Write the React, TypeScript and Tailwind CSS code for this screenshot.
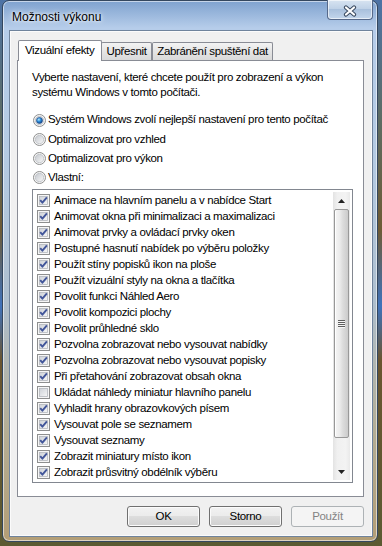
import React, { useState } from 'react';

const effects = [
  { label: 'Animace na hlavním panelu a v nabídce Start', on: true },
  { label: 'Animovat okna při minimalizaci a maximalizaci', on: true },
  { label: 'Animovat prvky a ovládací prvky oken', on: true },
  { label: 'Postupné hasnutí nabídek po výběru položky', on: true },
  { label: 'Použít stíny popisků ikon na ploše', on: true },
  { label: 'Použít vizuální styly na okna a tlačítka', on: true },
  { label: 'Povolit funkci Náhled Aero', on: true },
  { label: 'Povolit kompozici plochy', on: true },
  { label: 'Povolit průhledné sklo', on: true },
  { label: 'Pozvolna zobrazovat nebo vysouvat nabídky', on: true },
  { label: 'Pozvolna zobrazovat nebo vysouvat popisky', on: true },
  { label: 'Při přetahování zobrazovat obsah okna', on: true },
  { label: 'Ukládat náhledy miniatur hlavního panelu', on: false },
  { label: 'Vyhladit hrany obrazovkových písem', on: true },
  { label: 'Vysouvat pole se seznamem', on: true },
  { label: 'Vysouvat seznamy', on: true },
  { label: 'Zobrazit miniatury místo ikon', on: true },
  { label: 'Zobrazit průsvitný obdélník výběru', on: true },
];

const presets = [
  'Systém Windows zvolí nejlepší nastavení pro tento počítač',
  'Optimalizovat pro vzhled',
  'Optimalizovat pro výkon',
  'Vlastní:',
];

const Radio = ({ selected }: { selected: boolean }) => (
  <svg width="13" height="13" viewBox="0 0 13 13" className="shrink-0">
    <defs>
      <linearGradient id="rbg" x1="0" y1="0" x2="1" y2="1">
        <stop offset="0" stopColor="#c4c8ce" />
        <stop offset="1" stopColor="#f8f8f8" />
      </linearGradient>
      <radialGradient id="rdot" cx="0.38" cy="0.35" r="0.7">
        <stop offset="0" stopColor="#b4e8fc" />
        <stop offset="0.45" stopColor="#2f8fdb" />
        <stop offset="1" stopColor="#0d3a80" />
      </radialGradient>
    </defs>
    <circle cx="6.5" cy="6.5" r="6" fill="#f5f5f5" stroke="#8e8f8f" />
    <circle cx="6.5" cy="6.5" r="4.2" fill="url(#rbg)" stroke="#b7bbc1" strokeWidth="0.7" />
    {selected && <circle cx="6.5" cy="6.5" r="3" fill="url(#rdot)" stroke="#1c4c8c" strokeWidth="0.6" />}
  </svg>
);

const Check = ({ checked }: { checked: boolean }) => (
  <svg width="13" height="13" viewBox="0 0 13 13" className="shrink-0">
    <defs>
      <linearGradient id="cbg" x1="0" y1="0" x2="1" y2="1">
        <stop offset="0" stopColor="#cdd1d7" />
        <stop offset="1" stopColor="#f7f7f7" />
      </linearGradient>
    </defs>
    <rect x="0.5" y="0.5" width="12" height="12" fill="#f6f6f6" stroke="#8e8f8f" />
    <rect x="2.5" y="2.5" width="8" height="8" fill="url(#cbg)" stroke="#b3b7bd" strokeWidth="0.8" />
    {checked && (
      <path d="M3.2 6.2 L5.4 8.7 L9.9 3.3" fill="none" stroke="#42569a" strokeWidth="1.9" strokeLinejoin="round" />
    )}
  </svg>
);

const Button = ({ label, disabled }: { label: string; disabled?: boolean }) => (
  <button
    className={
      disabled
        ? 'w-[73px] h-[21px] rounded-[3px] border border-[#adb2b5] bg-[#f4f4f4] text-[#838383]'
        : 'w-[73px] h-[21px] rounded-[3px] border border-[#707070] bg-[linear-gradient(#f2f2f2_0%,#ebebeb_50%,#dddddd_50%,#cfcfcf_100%)] shadow-[inset_0_0_0_1px_#fbfbfb] text-black'
    }
  >
    {label}
  </button>
);

export default function App() {
  const [preset, setPreset] = useState(0);

  return (
    <div className="w-[382px] h-[546px] overflow-hidden pl-[2px] bg-[linear-gradient(180deg,#4d73a6_0%,#5d6c63_22%,#6e5b35_42%,#3f72bb_56%,#6a5530_66%,#5b5a32_100%)] font-['Liberation_Sans',Arial,sans-serif] text-[11.5px] tracking-[-0.35px] text-black select-none">
      {/* Window frame (Aero glass) */}
      <div className="w-[376px] h-[542px] flex flex-col rounded-[7px] border border-[#34475f] pl-[6px] pr-[4px] pb-[4px] bg-[linear-gradient(180deg,#7fa2cf_0%,#b6cdea_5%,#b4cae2_30%,#aebfcf_55%,#b4ad94_80%,#b39e76_100%)] shadow-[inset_0_0_0_1px_rgba(255,255,255,0.55)]">
        {/* Title bar */}
        <div className="h-[29px] flex items-start justify-between shrink-0">
          <span className="pl-[3px] pt-[9px] text-[12px] tracking-normal leading-[15px] [text-shadow:0_0_6px_#fff,0_0_3px_#fff]">
            Možnosti výkonu
          </span>
          <div className="-mt-px w-[46px] h-[20px] flex items-center justify-center pt-[3px] rounded-b-[4px] border border-t-0 border-[#56698a] bg-[linear-gradient(#d8e4f1,#bdd0e6_50%,#a9c0dc_50%,#c3d6ec)] shadow-[inset_0_0_0_1px_rgba(255,255,255,0.6)]">
            <svg width="14" height="12" viewBox="0 0 14 12">
              <path d="M3 2.5 L11 9.5 M11 2.5 L3 9.5" stroke="#3a4a60" strokeWidth="4.2" strokeLinecap="round" />
              <path d="M3 2.5 L11 9.5 M11 2.5 L3 9.5" stroke="#ffffff" strokeWidth="2.2" strokeLinecap="round" />
            </svg>
          </div>
        </div>

        {/* Client area */}
        <div className="flex-1 flex flex-col border border-[#6f839c] bg-[#f0f0f0] shadow-[inset_0_0_0_1px_#fbfbfb] pt-[9px] pl-[7px] pr-[8px] pb-[9px]">
          {/* Tabs */}
          <div className="h-[20px] flex items-end pl-[1px] relative z-10 shrink-0">
            <div className="w-[84px] h-[21px] -mb-px relative z-20 bg-white border border-b-0 border-[#898c95] rounded-t-[2px] pl-[6px] pt-[1px] leading-[16px] whitespace-nowrap">
              Vizuální efekty
            </div>
            <div className="-ml-px w-[51px] h-[18px] border border-b-0 border-[#898c95] rounded-t-[2px] bg-[linear-gradient(#f3f3f3,#e5e5e5_50%,#d9d9d9)] text-center leading-[17px]">
              Upřesnit
            </div>
            <div className="w-[121px] h-[18px] border border-b-0 border-[#898c95] rounded-t-[2px] bg-[linear-gradient(#f3f3f3,#e5e5e5_50%,#d9d9d9)] text-center leading-[17px] whitespace-nowrap">
              Zabránění spuštění dat
            </div>
          </div>

          {/* Tab panel */}
          <div className="h-[437px] shrink-0 border border-[#898c95] bg-white pt-[9px] pl-[14px]">
            <p className="leading-[15px] whitespace-nowrap">
              Vyberte nastavení, které chcete použít pro zobrazení a výkon
              <br />
              systému Windows v tomto počítači.
            </p>

            <div className="mt-[10px] flex flex-col">
              {presets.map((p, i) => (
                <div
                  key={p}
                  onClick={() => setPreset(i)}
                  className={`${i === 0 ? 'h-[20px]' : 'h-[19px]'} flex items-center gap-[2px] pl-[1px] whitespace-nowrap`}
                >
                  <Radio selected={preset === i} />
                  <span>{p}</span>
                </div>
              ))}
            </div>

            {/* Effects list */}
            <div className="mt-[2px] w-[321px] h-[294px] border border-[#828790] p-[2px] flex">
              <div className="flex-1 flex flex-col overflow-hidden">
                {effects.map((e) => (
                  <div key={e.label} className="h-[16px] shrink-0 flex items-center gap-[4px] pl-[2px] leading-[16px] whitespace-nowrap">
                    <Check checked={e.on} />
                    <span>{e.label}</span>
                  </div>
                ))}
              </div>

              {/* Scrollbar */}
              <div className="w-[17px] flex flex-col bg-[linear-gradient(to_right,#e3e3e3,#f0f0f0_25%,#f3f3f3_75%,#e9e9e9)]">
                <div className="h-[17px] shrink-0 flex items-center justify-center">
                  <svg width="7" height="4" viewBox="0 0 7 4">
                    <path d="M0 4 L3.5 0 L7 4 Z" fill="#222" />
                  </svg>
                </div>
                <div className="h-[229px] shrink-0 mx-[1px] rounded-[2px] border border-[#989898] bg-[linear-gradient(to_right,#f6f6f6,#ececec_35%,#dcdcdc_60%,#cbcbcb)] shadow-[inset_1px_0_0_#ffffff] flex items-center justify-center">
                  <div className="flex flex-col gap-[1px]">
                    {[0, 1, 2, 3].map((g) => (
                      <div key={g} className="w-[7px] h-[1px] bg-[#5f5f5f] shadow-[0_1px_0_#f6f6f6]" />
                    ))}
                  </div>
                </div>
                <div className="flex-1" />
                <div className="h-[17px] shrink-0 flex items-center justify-center">
                  <svg width="7" height="4" viewBox="0 0 7 4">
                    <path d="M0 0 L7 0 L3.5 4 Z" fill="#222" />
                  </svg>
                </div>
              </div>
            </div>
          </div>

          {/* Dialog buttons */}
          <div className="mt-[9px] flex justify-end gap-[9px] shrink-0">
            <Button label="OK" />
            <Button label="Storno" />
            <Button label="Použít" disabled />
          </div>
        </div>
      </div>
    </div>
  );
}
